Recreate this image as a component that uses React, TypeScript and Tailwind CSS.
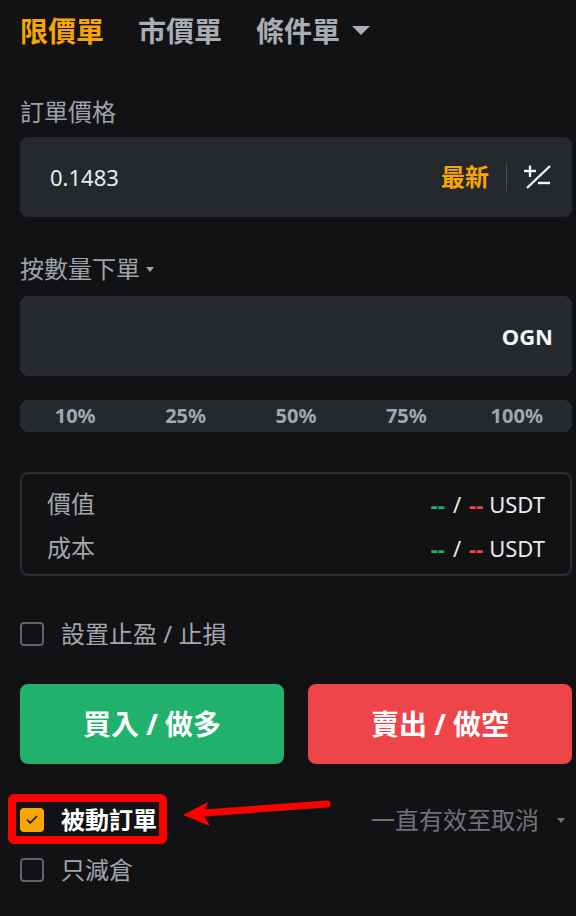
import { Check } from "lucide-react";

const PCTS = ["10%", "25%", "50%", "75%", "100%"];

export default function App() {
  return (
    <div className="min-h-screen w-full bg-[#121214] pl-5 pr-1 text-[#eaecef] font-[family-name:'Noto_Sans','Noto_Sans_CJK_TC',sans-serif]">
      {/* TABS */}
      <div className="flex h-[61px] items-center gap-[34px] text-[28px] font-bold leading-none">
        <span className="text-[#f7a600]">限價單</span>
        <span className="text-[#a9adb4]">市價單</span>
        <span className="flex items-center gap-3 text-[#a9adb4]">
          條件單
          <svg width="18" height="10" viewBox="0 0 18 10">
            <path d="M0 0 H18 L9 9 Z" fill="#a9adb4" />
          </svg>
        </span>
      </div>

      {/* PRICE */}
      <div className="mt-[39px] mb-[13px] h-6 text-[24px] leading-6 text-[#9ea2a9]">訂單價格</div>
      <div className="flex h-20 items-center rounded-lg bg-[#25282c] pl-[30px] pr-5">
        <span className="text-[22px] text-[#eaecef]">0.1483</span>
        <span className="ml-auto text-[24px] font-bold text-[#f7a600]">最新</span>
        <span className="mx-[17px] h-[28px] w-px bg-[#4a4d53]" />
        <PlusMinus />
      </div>

      {/* QUANTITY */}
      <div className="mt-10 mb-[15px] flex h-6 items-center gap-[6px] text-[24px] leading-6 text-[#9ea2a9]">
        按數量下單
        <svg width="8" height="5" viewBox="0 0 8 5">
          <path d="M0 0 H8 L4 5 Z" fill="#9ea2a9" />
        </svg>
      </div>
      <div className="flex h-20 items-center justify-end rounded-lg bg-[#25282c] pr-[19px]">
        <span className="text-[22px] font-bold text-[#f3f4f6]">OGN</span>
      </div>

      {/* PERCENT */}
      <div className="mt-6 grid h-8 grid-cols-5 items-center rounded-lg bg-[#25282c]">
        {PCTS.map((p) => (
          <span key={p} className="text-center text-[20px] font-bold text-[#a3a7ae]">
            {p}
          </span>
        ))}
      </div>

      {/* INFO */}
      <div className="mt-10 rounded-lg border-2 border-[#2b2e33] px-[25px] pt-2 pb-1">
        <InfoRow label="價值" />
        <InfoRow label="成本" />
      </div>

      {/* TP / SL */}
      <div className="mt-[46px] flex h-6 items-center gap-[17px]">
        <EmptyBox />
        <span className="text-[24px] text-[#a3a6ad]">設置止盈 / 止損</span>
      </div>

      {/* BUTTONS */}
      <div className="mt-[38px] grid grid-cols-2 gap-6">
        <button className="h-20 rounded-lg bg-[#20b26c] text-[28px] font-bold text-white">買入 / 做多</button>
        <button className="h-20 rounded-lg bg-[#ef454a] text-[28px] font-bold text-white">賣出 / 做空</button>
      </div>

      {/* PASSIVE */}
      <div className="relative mt-[44px] flex h-6 items-center">
        <div className="flex items-center gap-[17px]">
          <span className="flex h-6 w-6 items-center justify-center rounded-[4px] bg-[#f7a600]">
            <Check className="h-[14px] w-[14px] text-[#1b1b1f]" strokeWidth={3} />
          </span>
          <span className="text-[24px] font-bold text-white">被動訂單</span>
        </div>
        <span className="ml-auto mr-[7px] flex items-center gap-[18px] text-[24px] text-[#6f7379]">
          一直有效至取消
          <svg width="8" height="5" viewBox="0 0 8 5">
            <path d="M0 0 H8 L4 5 Z" fill="#6f7379" />
          </svg>
        </span>

        {/* annotation */}
        <div className="pointer-events-none absolute left-[-12px] top-[-14px] h-[50px] w-[159px] rounded-[6px] border-[8px] border-[#ff0000]" />
        <svg
          className="pointer-events-none absolute left-[140px] top-[-18px]"
          width="180"
          height="50"
          viewBox="0 0 180 50"
        >
          <line x1="44" y1="23" x2="167" y2="14" stroke="#ff0000" strokeWidth="7" strokeLinecap="round" />
          <path d="M23 25 L48 12 L43 24 L50 36 Z" fill="#ff0000" />
        </svg>
      </div>

      {/* REDUCE ONLY */}
      <div className="mt-[26px] flex h-6 items-center gap-[17px]">
        <EmptyBox />
        <span className="text-[24px] text-[#a3a6ad]">只減倉</span>
      </div>
    </div>
  );
}

function InfoRow({ label }: { label: string }) {
  return (
    <div className="flex h-11 items-center text-[24px]">
      <span className="text-[#a3a6ad]">{label}</span>
      <span className="ml-auto flex items-center text-[22px]">
        <span className="font-bold text-[#20b26c]">--</span>
        <span className="mx-2 text-[#eaecef]">/</span>
        <span className="mr-[6px] font-bold text-[#ef454a]">--</span>
        <span className="text-[#eaecef]">USDT</span>
      </span>
    </div>
  );
}

function EmptyBox() {
  return <span className="h-6 w-6 rounded-[4px] border-2 border-[#5f6268]" />;
}

function PlusMinus() {
  return (
    <svg width="28" height="24" viewBox="0 0 28 24" fill="none" stroke="#f3f4f6" strokeWidth="2.4">
      <path d="M0 6 H12" />
      <path d="M6 0.5 V12" />
      <path d="M3 23 L26 1" />
      <path d="M14 18 H26" />
    </svg>
  );
}
